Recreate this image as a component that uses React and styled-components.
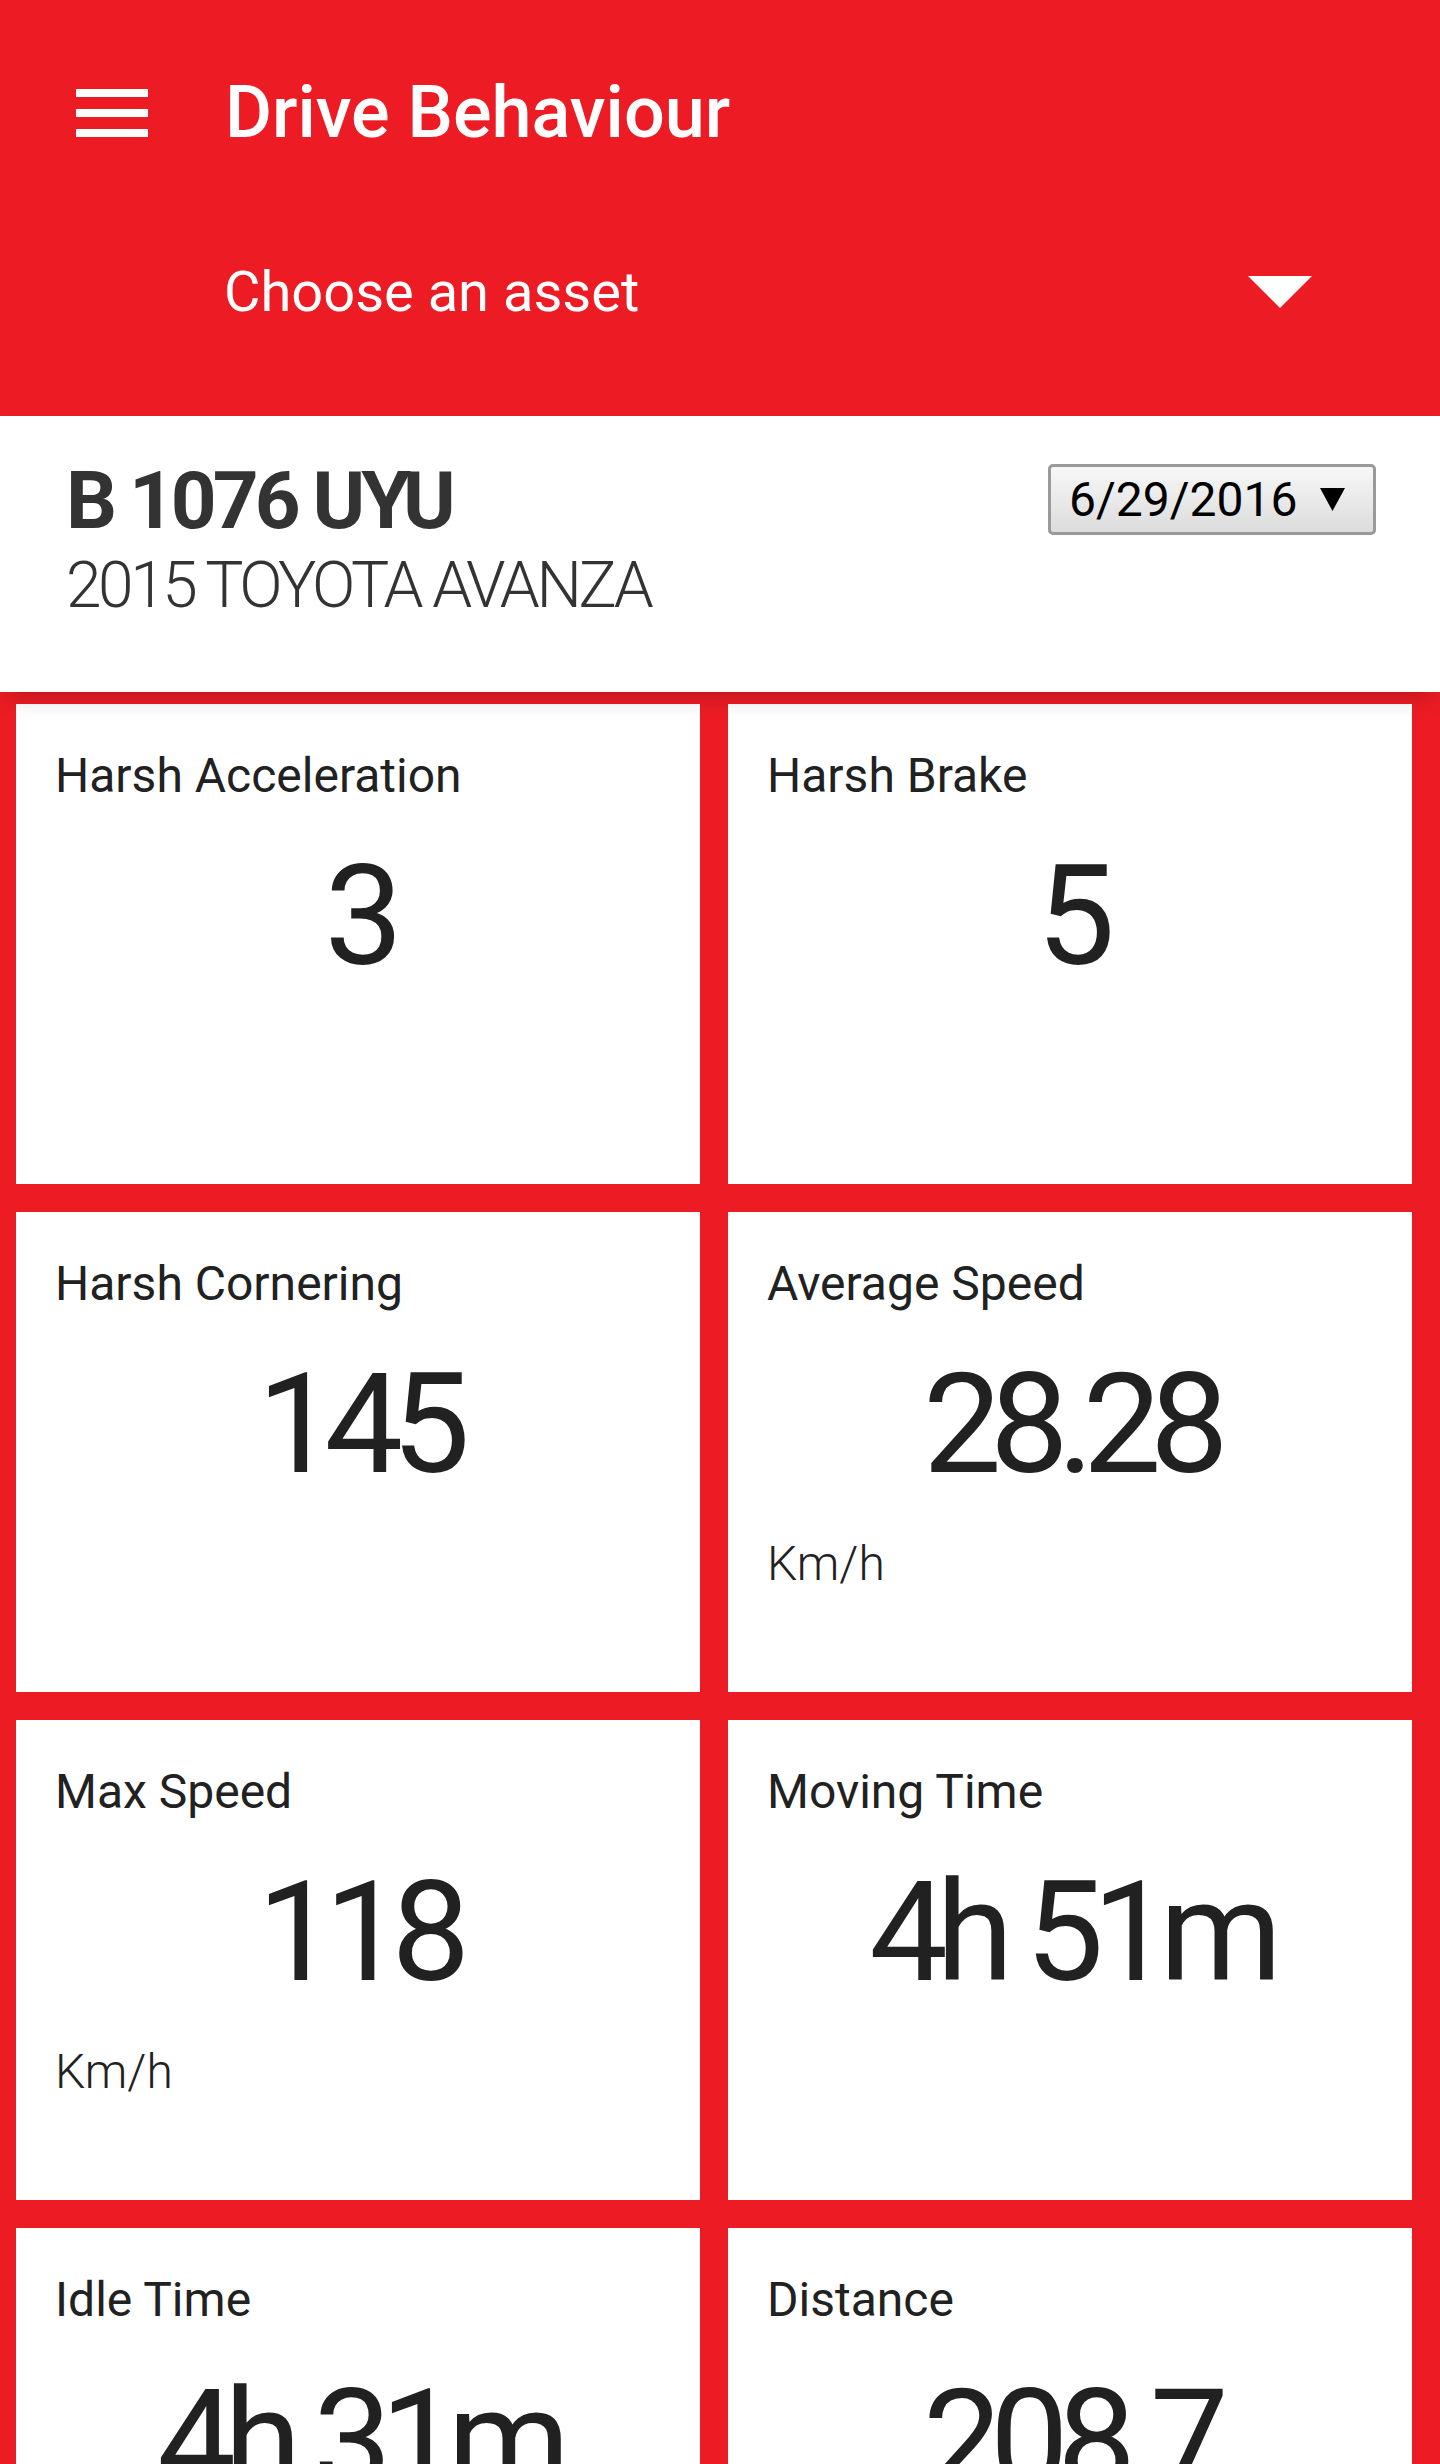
import React from "react";
import styled, { createGlobalStyle } from "styled-components";

const RED = "#ed1c24";

const GlobalStyle = createGlobalStyle`
  body {
    margin: 0;
    background: ${RED};
    font-family: Roboto, "Noto Sans", "Liberation Sans", sans-serif;
  }
`;

const Header = styled.header`
  background: ${RED};
  color: #ffffff;
  height: 416px;
  box-sizing: border-box;
  padding-bottom: 58px;
  display: flex;
  flex-direction: column;
`;

const Toolbar = styled.div`
  height: 226px;
  display: flex;
  align-items: center;
  padding-left: 64px;
`;

const MenuButton = styled.div`
  width: 96px;
  height: 96px;
  display: flex;
  align-items: center;
  justify-content: center;
`;

const Title = styled.h1`
  margin: 0 0 0 65px;
  font-size: 72px;
  line-height: 72px;
  font-weight: 500;
`;

const AssetRow = styled.div`
  height: 132px;
  display: flex;
  align-items: center;
  justify-content: space-between;
  padding: 0 128px 0 224px;
`;

const AssetLabel = styled.span`
  font-size: 56px;
  line-height: 56px;
  font-weight: 400;
`;

const InfoPanel = styled.section`
  position: relative;
  z-index: 1;
  background: #ffffff;
  height: 276px;
  box-sizing: border-box;
  padding: 45px 64px 0 66px;
  display: flex;
  justify-content: space-between;
  align-items: flex-start;
  color: #333333;
  box-shadow: 0 12px 22px -8px rgba(0, 0, 0, 0.22);
`;

const Plate = styled.div`
  font-size: 80px;
  line-height: 80px;
  font-weight: 700;
  letter-spacing: -4px;
`;

const Model = styled.div`
  margin-top: 13px;
  font-size: 64px;
  line-height: 64px;
  font-weight: 300;
  letter-spacing: -3.4px;
`;

const DateButton = styled.div`
  margin-top: 3px;
  width: 328px;
  height: 71px;
  box-sizing: border-box;
  border: 3px solid #9a9a9a;
  border-radius: 5px;
  background: linear-gradient(#f7f7f7, #dcdcdc);
  display: flex;
  align-items: center;
  padding-left: 18px;
  gap: 23px;
  color: #000000;
  font-size: 48px;
  line-height: 48px;
`;

const Grid = styled.main`
  display: grid;
  grid-template-columns: 1fr 1fr;
  gap: 28px;
  padding: 12px 28px 28px 16px;
  background: ${RED};
`;

const Card = styled.div`
  background: #ffffff;
  height: 480px;
  box-sizing: border-box;
  padding: 47px 39px 0;
  color: #212121;
`;

const Label = styled.div`
  font-size: 48px;
  line-height: 49px;
`;

const Value = styled.div`
  margin-top: 45px;
  text-align: center;
  font-size: 140px;
  line-height: 142px;
  letter-spacing: -11.5px;
  white-space: nowrap;
`;

const Unit = styled.div`
  margin-top: 45px;
  font-size: 48px;
  line-height: 48px;
  font-weight: 300;
`;

const stats = [
  { label: "Harsh Acceleration", value: "3" },
  { label: "Harsh Brake", value: "5" },
  { label: "Harsh Cornering", value: "145" },
  { label: "Average Speed", value: "28.28", unit: "Km/h" },
  { label: "Max Speed", value: "118", unit: "Km/h" },
  { label: "Moving Time", value: "4h 51m" },
  { label: "Idle Time", value: "4h 31m" },
  { label: "Distance", value: "208.7" },
];

function StatCard({ label, value, unit }) {
  return (
    <Card>
      <Label>{label}</Label>
      <Value>{value}</Value>
      {unit && <Unit>{unit}</Unit>}
    </Card>
  );
}

export default function App() {
  return (
    <>
      <GlobalStyle />
      <Header>
        <Toolbar>
          <MenuButton>
            <svg width="72" height="48" viewBox="0 0 72 48">
              <rect x="0" y="0" width="72" height="8" fill="#fff" />
              <rect x="0" y="20" width="72" height="8" fill="#fff" />
              <rect x="0" y="40" width="72" height="8" fill="#fff" />
            </svg>
          </MenuButton>
          <Title>Drive Behaviour</Title>
        </Toolbar>
        <AssetRow>
          <AssetLabel>Choose an asset</AssetLabel>
          <svg width="64" height="32" viewBox="0 0 64 32">
            <path d="M0 0 H64 L32 32 Z" fill="#fff" />
          </svg>
        </AssetRow>
      </Header>

      <InfoPanel>
        <div>
          <Plate>B 1076 UYU</Plate>
          <Model>2015 TOYOTA AVANZA</Model>
        </div>
        <DateButton>
          <span>6/29/2016</span>
          <svg width="25" height="23" viewBox="0 0 25 23">
            <path d="M0 0 H25 L12.5 23 Z" fill="#000" />
          </svg>
        </DateButton>
      </InfoPanel>

      <Grid>
        {stats.map((s) => (
          <StatCard key={s.label} {...s} />
        ))}
      </Grid>
    </>
  );
}
